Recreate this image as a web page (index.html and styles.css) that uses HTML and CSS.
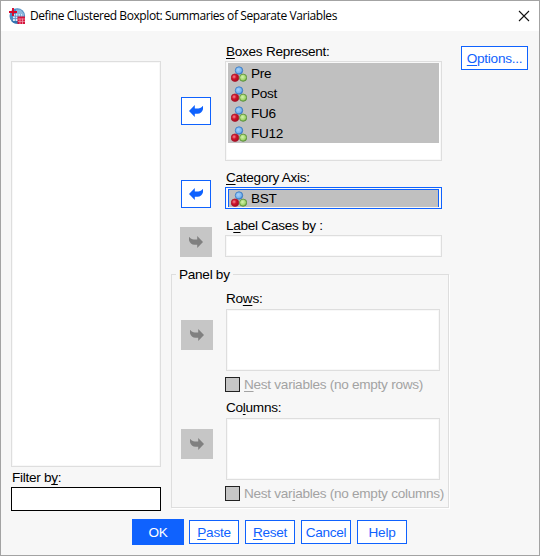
FILE: index.html
```html
<!DOCTYPE html>
<html lang="en">
<head>
<meta charset="utf-8">
<title>Define Clustered Boxplot</title>
<link rel="stylesheet" href="styles.css">
</head>
<body>
<svg class="defs" width="0" height="0">
  <defs>
    <radialGradient id="blue" cx=".4" cy=".4" r=".65"><stop offset="0" stop-color="#a8d4fa"/><stop offset=".65" stop-color="#78b4f0"/><stop offset="1" stop-color="#3478c4"/></radialGradient>
    <radialGradient id="red" cx=".38" cy=".38" r=".65"><stop offset="0" stop-color="#f58a92"/><stop offset=".45" stop-color="#d0142c"/><stop offset="1" stop-color="#a00c20"/></radialGradient>
    <radialGradient id="green" cx=".42" cy=".4" r=".65"><stop offset="0" stop-color="#d4f2ae"/><stop offset=".65" stop-color="#a0d46c"/><stop offset="1" stop-color="#568c34"/></radialGradient>
    <symbol id="nominal" viewBox="0 0 16 16">
      <circle cx="8" cy="4.5" r="3.7" fill="url(#blue)" stroke="#3c7cc4" stroke-width=".9"/>
      <circle cx="4" cy="11.7" r="3.8" fill="url(#red)" stroke="#a81428" stroke-width=".7"/>
      <circle cx="12.1" cy="11.7" r="3.6" fill="url(#green)" stroke="#609640" stroke-width=".9"/>
    </symbol>
    <symbol id="arrow" viewBox="0 0 14 14">
      <path d="M14 7 8.2 1V4.4H4.8C3.2 4.4 1.2 3.6.3 2H0v3.2C.6 7.6 2.8 9.8 5.6 9.8h2.6V13z" fill="currentColor"/>
    </symbol>
  </defs>
</svg>
<div class="dialog">
  <header class="titlebar">
    <svg class="app-icon" width="17" height="17" viewBox="0 0 17 17">
      <circle cx="8.3" cy="8" r="7.8" fill="#4c8cc4"/>
      <path d="M2 12.5A7.8 7.8 0 0 0 9 15.8V13z" fill="#3474b0"/>
      <path d="M7 1.5h4.5l3.5 4v3H7z" fill="#8cb8dc"/>
      <path d="M4 6h9v7H4z" fill="#d8e8f6"/>
      <path d="M4 8.2h9M4 10.5h5M6.4 6v7M9 6v4M11.4 6v3" stroke="#5890c8" stroke-width=".8"/>
      <path d="M0 4h8M4 0v8" stroke="#d8082c" stroke-width="1.9"/>
      <path d="M8.5 8.5H16V16H8.5z" fill="#d4143c"/>
      <path d="M9 11h7M9 13.4h7M11 10.5V16M13.5 10.5V16" stroke="#f4a8b8" stroke-width=".7"/>
    </svg>
    <h1>Define Clustered Boxplot: Summaries of Separate Variables</h1>
    <svg class="close" width="12" height="12" viewBox="0 0 12 12"><path d="M1 1 11 11M11 1 1 11" stroke="#111" stroke-width="1.1"/></svg>
  </header>
  <main class="content">
    <section class="source">
      <div class="box source-list"></div>
      <label class="filter-label">Filter b<u>y</u>:</label>
      <div class="filter-input"></div>
    </section>
    <section class="targets">
      <div class="target boxes">
        <button class="move active"><svg class="flip"><use href="#arrow"/></svg></button>
        <div class="field">
          <label><u>B</u>oxes Represent:</label>
          <div class="box tall">
            <div class="item"><svg><use href="#nominal"/></svg>Pre</div>
            <div class="item"><svg><use href="#nominal"/></svg>Post</div>
            <div class="item"><svg><use href="#nominal"/></svg>FU6</div>
            <div class="item"><svg><use href="#nominal"/></svg>FU12</div>
          </div>
        </div>
      </div>
      <div class="target category">
        <button class="move active"><svg class="flip"><use href="#arrow"/></svg></button>
        <div class="field">
          <label><u>C</u>ategory Axis:</label>
          <div class="box single focused"><div class="item"><svg><use href="#nominal"/></svg>BST</div></div>
        </div>
      </div>
      <div class="target cases">
        <button class="move"><svg><use href="#arrow"/></svg></button>
        <div class="field">
          <label>L<u>a</u>bel Cases by :</label>
          <div class="box single"></div>
        </div>
      </div>
      <div class="panel">
        <span class="legend">Panel by</span>
        <div class="target nested">
          <button class="move"><svg><use href="#arrow"/></svg></button>
          <div class="field">
            <label>Ro<u>w</u>s:</label>
            <div class="box"></div>
            <div class="check"><i></i><span><u>N</u>est variables (no empty rows)</span></div>
          </div>
        </div>
        <div class="target nested">
          <button class="move"><svg><use href="#arrow"/></svg></button>
          <div class="field">
            <label>Co<u>l</u>umns:</label>
            <div class="box"></div>
            <div class="check"><i></i><span>Nest var<u>i</u>ables (no empty columns)</span></div>
          </div>
        </div>
      </div>
    </section>
    <button class="btn options"><span><u>O</u>ptions...</span></button>
  </main>
  <footer class="actions">
    <button class="btn primary">OK</button>
    <button class="btn"><span><u>P</u>aste</span></button>
    <button class="btn"><span><u>R</u>eset</span></button>
    <button class="btn">Cancel</button>
    <button class="btn">Help</button>
  </footer>
</div>
</body>
</html>
```
FILE: styles.css
```css
* { box-sizing: border-box; }
body {
  margin: 0;
  font: 13.6px/16px "Liberation Sans", Arial, sans-serif;
  letter-spacing: -0.28px;
  color: #000;
}
.defs { position: absolute; }
u { text-decoration: underline; text-underline-offset: 2px; text-decoration-thickness: 1px; text-decoration-skip-ink: none; }
button { font: inherit; letter-spacing: inherit; margin: 0; padding: 0; }
label { display: block; height: 16px; white-space: nowrap; }

.dialog {
  width: 540px;
  height: 556px;
  border: 1px solid #a3a3a3;
  background: #f7f7f7;
  display: flex;
  flex-direction: column;
}
.titlebar {
  height: 30px;
  flex: none;
  background: #fff;
  display: flex;
  align-items: center;
  padding: 0 9px 0 8px;
}
.titlebar h1 {
  margin: 0 auto 0 4px;
  font: 12px/16px "Open Sans", "Noto Sans", sans-serif;
  letter-spacing: -0.42px;
  white-space: nowrap;
}
.content {
  height: 488px;
  flex: none;
  display: flex;
  align-items: flex-start;
  padding-left: 10px;
}
.box { background: #fff; border: 1px solid #dedede; box-shadow: inset 0 0 0 1px #f8f8f8; }

.source { width: 150px; padding-top: 30px; }
.source-list { height: 406px; }
.filter-label { margin: 3px 0 1px 1px; }
.filter-input { height: 24px; background: #fff; border: 1px solid #000; }

.targets { width: 278px; margin-left: 10px; padding-top: 12px; }
.target { display: flex; padding-left: 10px; }
.field { width: 217px; margin-left: 14px; }
.field label { padding: 1px 0 0 1px; margin-bottom: 2px; }
.move {
  width: 32px;
  height: 30px;
  flex: none;
  border: 0;
  background: #c6c6c6;
  color: #808080;
  display: flex;
  align-items: center;
  justify-content: center;
}
.move svg { width: 14px; height: 14px; }
.move.active { width: 30px; height: 28px; border: 1px solid #0f62fe; background: #fff; color: #0f62fe; }
.flip { transform: scaleX(-1); }

.boxes { height: 118px; }
.boxes .move { margin-top: 54px; }
.box.tall { height: 100px; padding: 1px 2px; }
.item { height: 20px; display: flex; align-items: center; background: #c0c0c0; padding: 1px 0 0 3px; gap: 4px; }
.item svg { width: 16px; height: 16px; flex: none; }

.category { height: 40px; margin-top: 8px; }
.category .move { margin-top: 11px; }
.box.single { height: 22px; }
.box.focused { border-color: #0f62fe; padding: 1px 2px; }
.focused .item { height: 18px; border: solid #0f62fe; border-width: 1px 1px 0; padding-left: 2px; }

.cases { height: 40px; margin-top: 8px; padding-left: 9px; }
.cases .move { margin-top: 10px; }
.cases .field { margin-left: 13px; }

.panel { height: 234px; margin-top: 17px; border: 1px solid #dedede; box-shadow: 1px 1px 0 #fff; }
.legend { display: block; width: max-content; height: 16px; margin: -8px 0 8px 4px; padding: 0 3px; background: #f7f7f7; }
.nested { height: 109px; padding-left: 9px; }
.nested .move { margin-top: 29px; }
.nested .field { width: 220px; margin-left: 13px; }
.nested .field label { padding: 0; }
.nested .box { width: 214px; height: 62px; }
.check { display: flex; align-items: center; gap: 4px; height: 15px; margin: 6px 0 0 -1px; color: #a3a3a3; white-space: nowrap; }
.check i { width: 15px; height: 15px; background: #c6c6c6; border: 1px solid #222; flex: none; }

.btn { height: 24px; width: 50px; border: 1px solid #0f62fe; background: #fff; color: #0f62fe; padding-top: 1px; }
.options { width: 67px; margin: 15px 0 0 12px; }
.actions { display: flex; align-items: center; gap: 6px; height: 26px; margin-left: 131px; }
.primary { width: 52px; height: 26px; background: #0f62fe; color: #fff; margin-right: -1px; }
```
